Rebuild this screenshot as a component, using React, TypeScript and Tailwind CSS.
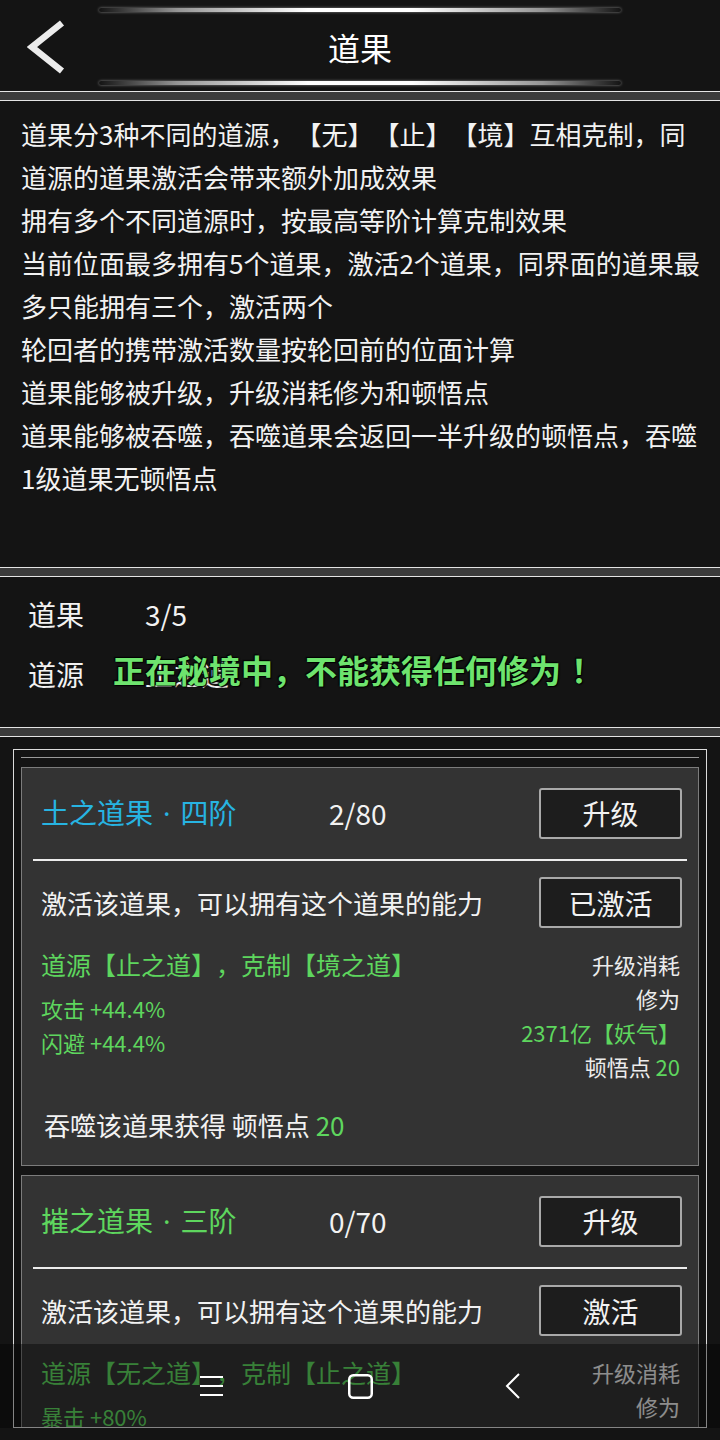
import React from "react";

const GREEN = "text-[#5ed65e]";

function Sep() {
  return (
    <div className="flex flex-col shrink-0">
      <div className="h-px bg-[#e4e4e4]" />
      <div className="h-[8px] bg-[#3b3b3b]" />
      <div className="h-px bg-[#e4e4e4]" />
    </div>
  );
}

function Glow() {
  return (
    <div className="mx-[99px] h-[4px] rounded-full bg-[linear-gradient(to_right,rgba(255,255,255,0),rgba(255,255,255,0.55)_15%,#ffffff_40%,#ffffff_60%,rgba(255,255,255,0.55)_85%,rgba(255,255,255,0))] shadow-[0_0_3px_rgba(255,255,255,0.5)]" />
  );
}

function Btn({ children }: { children: React.ReactNode }) {
  return (
    <div className="w-[143px] h-[51px] shrink-0 border-2 border-[#a9a9a9] rounded-[3px] bg-[#1d1d1d] flex items-center justify-center text-[28px] text-[#f2f2f2] leading-none">
      {children}
    </div>
  );
}

type CardProps = {
  name: string;
  level: string;
  titleClass: string;
  count: string;
  act: string;
  src: string;
  stats: string[];
  cost: string;
  point: string;
};

function Card({ name, level, titleClass, count, act, src, stats, cost, point }: CardProps) {
  return (
    <div className="shrink-0 border border-[#7c7c7c] bg-[#333333]">
      <div className="flex items-center pt-[19px] pb-[20px] pl-[19px] pr-[16px]">
        <div className={"w-[288px] text-[28px] leading-[51px] " + titleClass}>
          {name}
          <span className="font-['Noto_Sans',sans-serif] px-[10px]">·</span>
          {level}
        </div>
        <div className="flex-1 text-[28px] leading-[51px] text-[#f2f2f2]">{count}</div>
        <Btn>升级</Btn>
      </div>
      <div className="mx-[11px] h-[2px] bg-[#ececec]" />
      <div className="flex items-center pt-[16px] pl-[19px] pr-[16px]">
        <div className="flex-1 text-[26px] leading-[51px] text-[#f2f2f2]">激活该道果，可以拥有这个道果的能力</div>
        <Btn>{act}</Btn>
      </div>
      <div className="flex justify-between pt-[19px] pl-[19px] pr-[18px]">
        <div className="flex flex-col">
          <div className={"text-[25px] leading-[34px] " + GREEN}>{src}</div>
          <div className="mt-[10px] flex flex-col">
            {stats.map((s) => (
              <div key={s} className={"text-[22px] leading-[34px] " + GREEN}>
                {s}
              </div>
            ))}
          </div>
        </div>
        <div className="flex flex-col items-end text-right text-[22px] leading-[34px] text-[#ececec]">
          <div>升级消耗</div>
          <div>修为</div>
          <div className={GREEN}>{cost}</div>
          <div>
            顿悟点 <span className={GREEN}>{point}</span>
          </div>
        </div>
      </div>
      <div className="pl-[22px] mt-[25px] pb-[23px] text-[26px] leading-[34px] text-[#f2f2f2]">
        吞噬该道果获得 顿悟点 <span className={GREEN}>{point}</span>
      </div>
    </div>
  );
}

export default function App() {
  return (
    <div className="relative w-[720px] h-[1440px] overflow-hidden bg-[#141414] font-['Noto_Sans_CJK_SC','Noto_Sans',sans-serif] text-[#f2f2f2] [text-spacing-trim:space-all]">
      {/* Header */}
      <div className="h-[91px] flex flex-col pt-[8px] pb-[6px]">
        <Glow />
        <div className="flex-1 grid grid-cols-[1fr_auto_1fr] items-center">
          <div className="pl-[27px] flex items-center">
            <svg width="40" height="56" viewBox="0 0 40 56">
              <polyline points="35,4 5,28 35,52" fill="none" stroke="#ececec" strokeWidth="6.5" strokeLinecap="butt" strokeLinejoin="miter" />
            </svg>
          </div>
          <div className="text-[32px] leading-none text-white">道果</div>
          <div />
        </div>
        <Glow />
      </div>
      <Sep />
      {/* Description */}
      <div className="h-[466px] pt-[11px] pl-[21px] pr-[15px] text-[26px] leading-[43px] text-[#f2f2f2]">
        <div>道果分3种不同的道源，【无】【止】【境】互相克制，同道源的道果激活会带来额外加成效果</div>
        <div>拥有多个不同道源时，按最高等阶计算克制效果</div>
        <div>当前位面最多拥有5个道果，激活2个道果，同界面的道果最多只能拥有三个，激活两个</div>
        <div>轮回者的携带激活数量按轮回前的位面计算</div>
        <div>道果能够被升级，升级消耗修为和顿悟点</div>
        <div>道果能够被吞噬，吞噬道果会返回一半升级的顿悟点，吞噬1级道果无顿悟点</div>
      </div>
      <Sep />
      {/* Info */}
      <div className="relative h-[150px] pt-[7px] pl-[28px] text-[28px] leading-[60px]">
        <div className="flex">
          <div className="w-[117px]">道果</div>
          <div>3/5</div>
        </div>
        <div className="flex">
          <div className="w-[117px]">道源</div>
          <div>止之道</div>
        </div>
        <div className="absolute left-[113px] top-[67px] text-[32px] leading-[50px] font-bold text-[#6ee36e] [text-shadow:0_0_2px_#000,1px_1px_1px_#000,-1px_-1px_1px_#000]">
          正在秘境中，不能获得任何修为<span className="pl-[10px]">！</span>
        </div>
      </div>
      <Sep />
      {/* List */}
      <div className="pt-[12px] px-[13px]">
        <div className="h-[679px] overflow-hidden border border-[#dcdcdc] px-[7px] pt-[7px]">
          <div className="h-full overflow-hidden border-t border-[#9a9a9a] pt-[9px] flex flex-col gap-[9px]">
            <Card
              name="土之道果"
              level="四阶"
              titleClass="text-[#27b4e2]"
              count="2/80"
              act="已激活"
              src="道源【止之道】，克制【境之道】"
              stats={["攻击 +44.4%", "闪避 +44.4%"]}
              cost="2371亿【妖气】"
              point="20"
            />
            <Card
              name="摧之道果"
              level="三阶"
              titleClass="text-[#5ed65e]"
              count="0/70"
              act="激活"
              src="道源【无之道】，克制【止之道】"
              stats={["暴击 +80%"]}
              cost="1660亿【妖气】"
              point="15"
            />
          </div>
        </div>
      </div>
      {/* Nav bar overlay */}
      <div className="absolute left-0 right-0 top-[1344px] h-[84px] bg-black/40 flex items-center">
        <svg className="ml-[200px]" width="23" height="22" viewBox="0 0 23 22">
          <line x1="0" y1="2" x2="23" y2="2" stroke="#ffffff" strokeWidth="2" />
          <line x1="0" y1="11" x2="23" y2="11" stroke="#ffffff" strokeWidth="2" />
          <line x1="0" y1="20" x2="23" y2="20" stroke="#ffffff" strokeWidth="2" />
        </svg>
        <svg className="ml-[125px]" width="25" height="25" viewBox="0 0 25 25">
          <rect x="1.25" y="1.25" width="22.5" height="22.5" rx="4" fill="none" stroke="#ffffff" strokeWidth="2.5" />
        </svg>
        <svg className="ml-[132px]" width="16" height="26" viewBox="0 0 16 26">
          <polyline points="14,1 2,13 14,25" fill="none" stroke="#ffffff" strokeWidth="2" />
        </svg>
      </div>
    </div>
  );
}
